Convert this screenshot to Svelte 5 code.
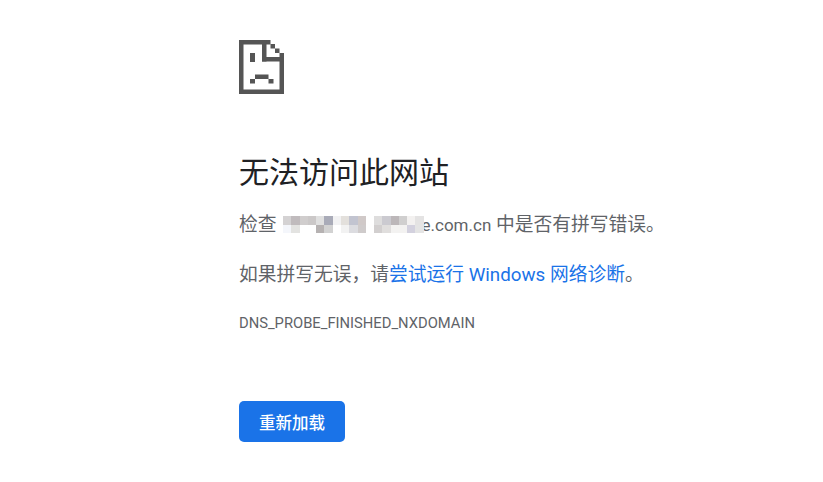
<script>
  const a = [
    ['#d4d2d3','#c0bbbd','#d0cdcd','#cbc8c8','#e0e0e0','#a9abb8','#f2f2f3','#e3e0dc','#c2c4d0','#d0c9c8'],
    ['#f4f6fb','#e3e3e1','#ffffff','#ffffff','#b6b2b2','#d2d2d2','#ffffff','#f2f2f2','#dcdce0','#cfcbcb']
  ];
  const b = [
    ['#dedddd','#cbcad0','#bcb7b9','#d0cfcf','#f3f1f0','#e4e3e3'],
    ['#d2cfcf','#e0dedd','#f3f2f1','#f3f2f1','#d3d1de','#e4e4e4']
  ];
  const iconRects = [
    [0,0,31.5,4.5],[0,0,4.5,54],[0,49.5,45,4.5],[40.5,17,4.5,37],
    [23,0,4.5,21.5],[23,17,22,4.5],
    [31.5,4,4.5,4.5],[36,8.5,4.5,4.5],[40.5,13,4.5,4.5],
    [11,13,5,9],[16,34.5,13.5,4.5],[11,39,5,4.5],[29.5,39,5,4.5]
  ];
</script>

<main class="page">
  <div class="wrap">
    <svg class="icon" viewBox="0 0 45 54" width="45" height="54" aria-hidden="true">
      {#each iconRects as r}<rect x={r[0]} y={r[1]} width={r[2]} height={r[3]} fill="#555" />{/each}
    </svg>
    <h1>无法访问此网站</h1>
    <p class="line first">检查<span class="blur">
        <span class="mosaic m1">{#each a as r}<span class="row">{#each r as c}<i style="background:{c}"></i>{/each}</span>{/each}</span>
        <span class="mosaic m2">{#each b as r}<span class="row">{#each r as c}<i style="background:{c}"></i>{/each}</span>{/each}</span>
      </span><span class="domain">e.com.cn</span> 中是否有拼写错误。</p>
    <p class="line">如果拼写无误，请<a href="#x">尝试运行 Windows 网络诊断</a>。</p>
    <div class="code">DNS_PROBE_FINISHED_NXDOMAIN</div>
    <button>重新加载</button>
  </div>
</main>

<style>
  :global(body) { margin: 0; background: #fff; }
  .page {
    font-family: Roboto, "Noto Sans CJK SC", sans-serif;
    color: #5f6368;
    height: 482px;
    overflow: hidden;
  }
  .wrap { margin-left: 239px; padding-top: 40px; width: 560px; }
  .icon { display: block; }
  h1 {
    margin: 59px 0 0;
    font-size: 30px;
    font-weight: 400;
    line-height: 40px;
    color: #202124;
  }
  .line { margin: 0; font-size: 18.75px; line-height: 25px; white-space: nowrap; }
  .first { margin-top: 20px; }
  .line + .line { margin-top: 25px; }
  a { color: #1a73e8; text-decoration: none; }
  .domain { font-size: 17px; }
  .blur { display: inline-block; vertical-align: -6px; width: 145px; height: 24px; position: relative; }
  .mosaic { position: absolute; top: 3px; display: block; }
  .m1 { left: 6.5px; }
  .m2 { left: 97.5px; }
  .row { display: flex; }
  i { display: block; width: 8.3px; height: 8.5px; }
  .code { margin-top: 25px; font-size: 14.75px; line-height: 20px; }
  button {
    display: block;
    margin-top: 68px;
    width: 106px;
    height: 41px;
    border: 0;
    border-radius: 5px;
    background: #1a73e8;
    color: #fff;
    font: 500 16.5px Roboto, "Noto Sans CJK SC", sans-serif;
  }
</style>
